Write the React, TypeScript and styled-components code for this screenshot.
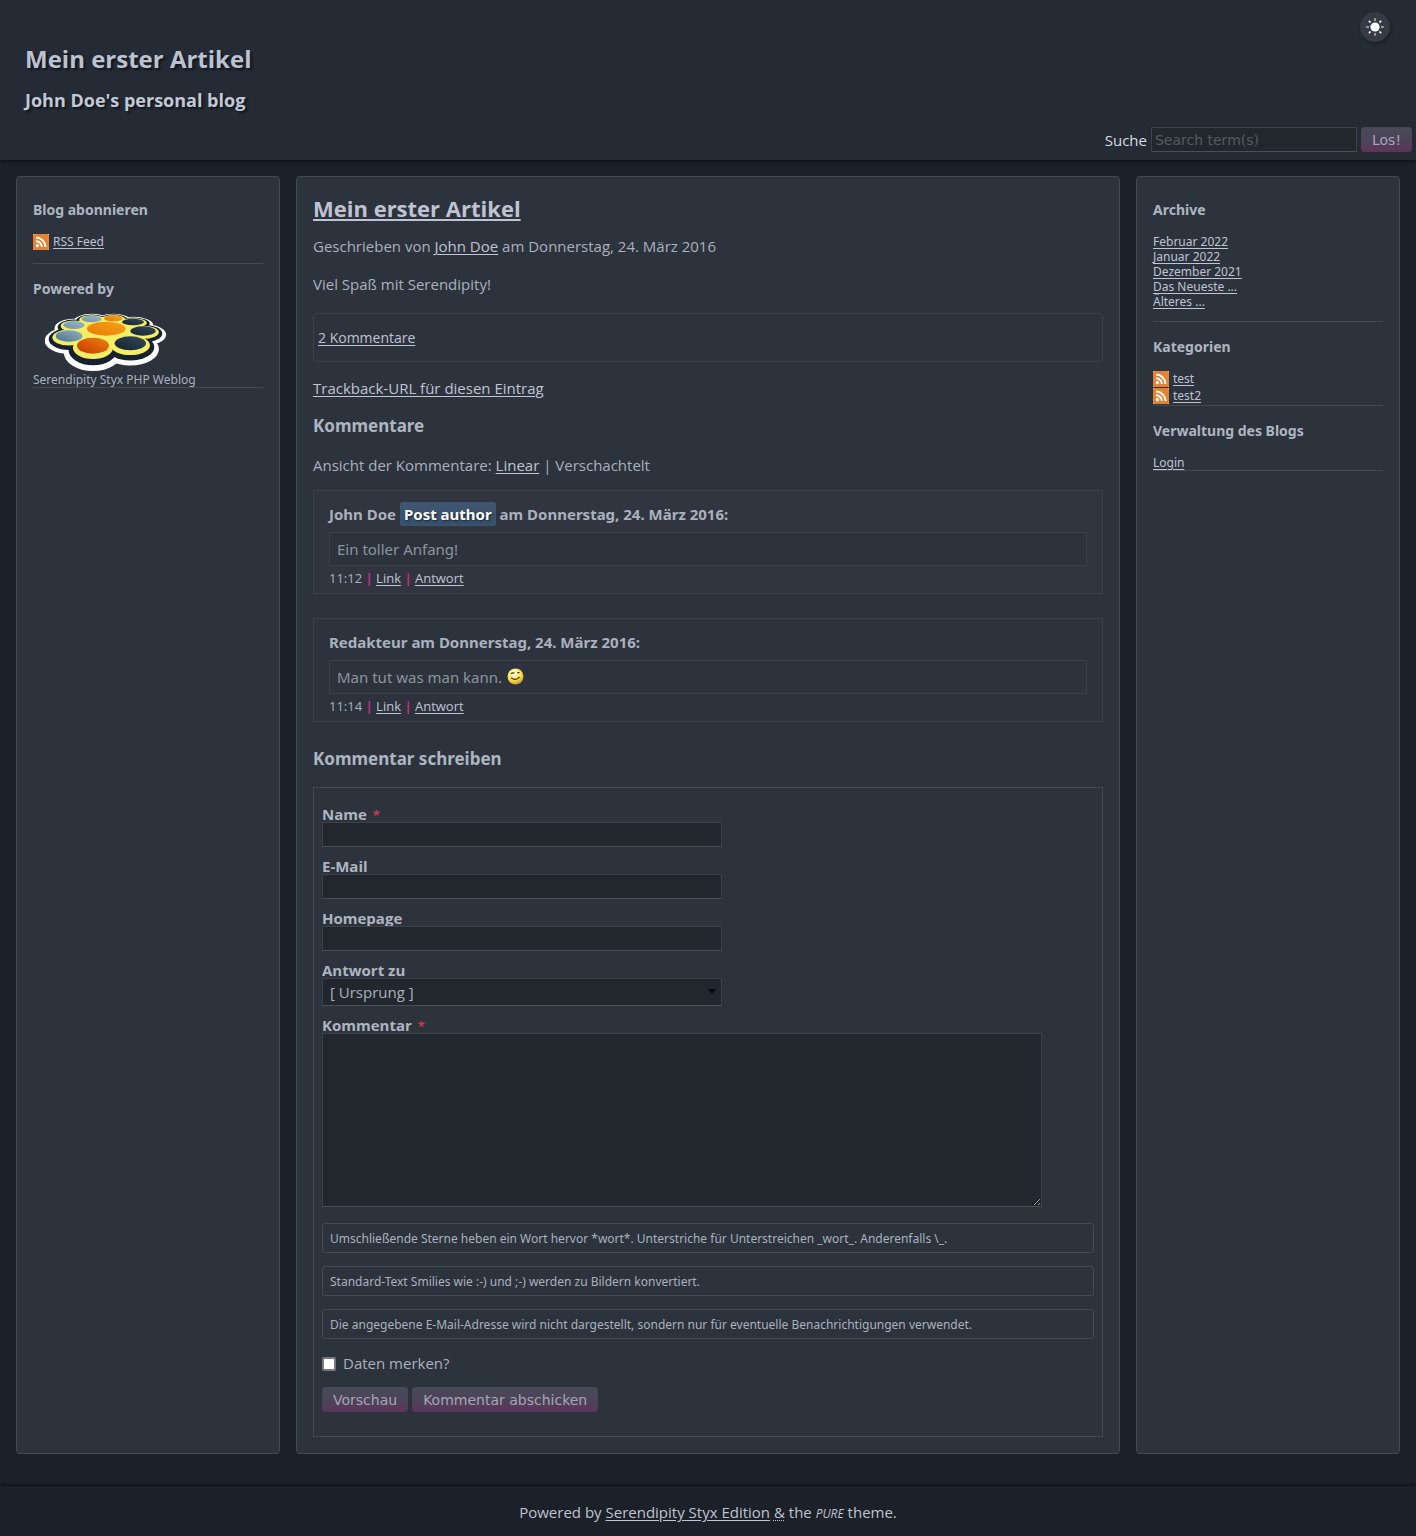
import React, { useState } from 'react';
import styled, { createGlobalStyle, css } from 'styled-components';

const color = {
  page: '#1c2028',
  header: '#242b34',
  panel: '#2d333d',
  border: '#454952',
  faint: '#3c414b',
  field: '#22272e',
  text: '#a9b1bd',
  heading: '#adb6c0',
  link: '#bfc3d2',
  accent: '#c0308a',
};

const sans = '"Open Sans", "Noto Sans", sans-serif';
const roomy = '"Noto Sans", "Open Sans", sans-serif';
const wide = '"DejaVu Sans", Verdana, sans-serif';

const GlobalStyle = createGlobalStyle`
  *, *::before, *::after { box-sizing: border-box; }
  body {
    margin: 0;
    background: ${color.page};
    color: ${color.text};
    font: 15px/24px ${sans};
  }
  h1, h2, h3, h4, p, ul { margin: 0; padding: 0; }
  ul { list-style: none; }
  a { color: ${color.link}; text-underline-offset: 2px; }
`;

const Header = styled.header`
  position: relative;
  display: flex;
  flex-direction: column;
  min-height: 160px;
  padding: 42px 4px 8px 25px;
  background: ${color.header};
  box-shadow: 0 1px 4px #0a0d12;
`;

const SiteTitle = styled.h1`
  font-size: 24px;
  line-height: 34px;
  color: #bcc2d0;
  text-shadow: 2px 2px 2px #12161c;
`;

const SiteClaim = styled.p`
  margin-top: 12px;
  font-size: 18px;
  font-weight: 700;
  color: #c3c8d6;
  text-shadow: 2px 2px 2px #12161c;
`;

const ThemeToggle = styled.button`
  position: absolute;
  top: 12px;
  right: 26px;
  display: grid;
  place-items: center;
  width: 30px;
  height: 30px;
  padding: 0;
  border: 0;
  border-radius: 50%;
  background: #353a45;
  box-shadow: 1px 2px 3px #1b1f26;
`;

const SearchForm = styled.form`
  display: flex;
  align-items: center;
  justify-content: flex-end;
  gap: 4px;
  margin-top: auto;
  color: #d5dde2;
  line-height: 20px;
`;

const fieldStyle = css`
  border: 1px solid ${color.faint};
  border-bottom-color: #4b4f57;
  border-radius: 0;
  background: ${color.field};
  color: ${color.text};
  outline: 0;
`;

const SearchInput = styled.input`
  ${fieldStyle}
  width: 206px;
  height: 25px;
  padding: 0 3px;
  font: 14px ${wide};
  &::placeholder { color: #545a62; opacity: 1; }
`;

const Button = styled.button`
  height: 25px;
  padding: 0 11px;
  border: 0;
  border-radius: 4px;
  background: linear-gradient(#464a58, #4c4358 55%, #5f3459);
  color: #a9a3b8;
  font: 14px ${wide};
`;

const Columns = styled.div`
  display: grid;
  grid-template-columns: 264px minmax(0, 1fr) 264px;
  gap: 16px;
  padding: 16px 16px 32px;
`;

const panelStyle = css`
  padding: 16px;
  border: 1px solid ${color.border};
  border-radius: 4px;
  background: ${color.panel};
`;

const Main = styled.main`${panelStyle}`;

const Sidebar = styled.aside`
  ${panelStyle}
  padding-top: 8px;
  font: 12px/15px ${roomy};
`;

const Widget = styled.section<{ $loose?: boolean }>`
  padding: 15px 0 ${p => (p.$loose ? 12 : 0)}px;
  border-bottom: 1px solid ${color.border};
`;

const WidgetTitle = styled.h3`
  margin-bottom: 14px;
  font-size: 14px;
  line-height: 20px;
  color: ${color.heading};
`;

const FeedRow = styled.li`
  display: flex;
  align-items: flex-start;
  gap: 4px;
  height: 17px;
`;

const Logo = styled.svg`
  display: block;
  margin: -1px 0 0 12px;
`;

const EntryTitle = styled.h2`
  font-size: 22px;
  line-height: 30px;
`;

const Line = styled.p<{ $top: number }>`
  margin-top: ${p => p.$top}px;
`;

const CommentCount = styled.div`
  margin-top: 17px;
  padding: 12px 4px 11px;
  border: 1px solid ${color.faint};
  border-radius: 4px;
  font-size: 14px;
`;

const SectionTitle = styled.h3<{ $top: number }>`
  margin-top: ${p => p.$top}px;
  font: 700 17px/24px ${roomy};
  color: ${color.heading};
`;

const CommentList = styled.div`
  display: grid;
  gap: 24px;
  margin-top: 13px;
`;

const Comment = styled.article<{ $own?: boolean }>`
  padding: 11px 15px 3px;
  border: 1px solid ${color.faint};
  background: ${p => (p.$own ? '#31353f' : 'transparent')};
`;

const CommentHead = styled.h4`
  font: 700 15px/24px ${roomy};
  color: ${color.text};
`;

const AuthorBadge = styled.span`
  padding: 1px 3px;
  border: 1px solid #41536a;
  border-radius: 3px;
  background: linear-gradient(#41566f, #34516f);
  color: #fff;
  text-shadow: 1px 1px 2px #14202c;
`;

const CommentBody = styled.p`
  display: flex;
  align-items: center;
  gap: 5px;
  height: 34px;
  margin-top: 6px;
  padding: 0 7px 1px;
  border: 1px solid ${color.faint};
  background: ${color.panel};
  color: #8e939b;
  font-family: ${roomy};
`;

const CommentMeta = styled.p`
  font-size: 13px;
`;

const Bar = styled.span`
  color: ${color.accent};
  font-weight: 700;
`;

const CommentForm = styled.form`
  margin-top: 16px;
  padding: 18px 8px 24px;
  border: 1px solid ${color.border};
`;

const Field = styled.div`
  display: flex;
  flex-direction: column;
  margin-bottom: 11px;
`;

const Label = styled.label`
  font-weight: 700;
  line-height: 16px;
  color: ${color.heading};
`;

const Required = styled.span`
  margin-left: 2px;
  color: #d03a4c;
  font-size: 13px;
  line-height: 1;
`;

const TextInput = styled.input`
  ${fieldStyle}
  width: 400px;
  max-width: 100%;
  height: 25px;
  padding: 0 7px;
  font: 15px ${sans};
`;

const SelectWrap = styled.div`
  position: relative;
  width: 400px;
  max-width: 100%;
`;

const Select = styled.select`
  ${fieldStyle}
  display: block;
  appearance: none;
  width: 100%;
  height: 28px;
  padding: 0 7px;
  font: 15px ${sans};
`;

const Caret = styled.svg`
  position: absolute;
  top: 11px;
  right: 6px;
  pointer-events: none;
`;

const TextArea = styled.textarea`
  ${fieldStyle}
  width: 720px;
  max-width: 100%;
  height: 174px;
  padding: 4px 7px;
  font: 15px ${sans};
`;

const Notes = styled.div`
  display: grid;
  gap: 13px;
  margin-top: 16px;
`;

const Note = styled.p`
  padding: 5px 7px 3px;
  border: 1px solid ${color.border};
  border-radius: 3px;
  font: 12px/20px ${roomy};
`;

const Remember = styled.div`
  display: flex;
  align-items: center;
  gap: 7px;
  margin-top: 12px;
`;

const CheckBox = styled.input`
  appearance: none;
  width: 14px;
  height: 14px;
  margin: 2px 0 0;
  border: 2px solid #767a80;
  border-radius: 2px;
  background: #fff;
  &:checked { background: ${color.accent}; }
`;

const Actions = styled.div`
  display: flex;
  gap: 4px;
  margin-top: 12px;
`;

const Footer = styled.footer`
  padding: 14px 16px 12px;
  text-align: center;
  color: ${color.link};
  box-shadow: 0 -1px 3px #0a0d12;
`;

const Small = styled.em`
  font-size: 12px;
`;

const Amp = styled.abbr`
  text-decoration: underline dotted 1px;
  text-underline-offset: 2px;
`;

const Sun = () => (
  <svg width="18" height="18" viewBox="0 0 18 18" aria-hidden="true">
    <circle cx="9" cy="9" r="4.6" fill="#fff" />
    <g stroke="#fff" strokeWidth="1.5">
      <path d="M9 .2v2.800M9 15v2.800M.2 9h2.800M15 9h2.800" opacity=".65" />
      <path d="M2.900 2.900l1.600 1.600M13.500 13.500l1.600 1.600M2.900 15.100l1.600-1.600M13.500 4.500l1.600-1.600" strokeWidth="1.7" />
    </g>
  </svg>
);

const FeedIcon = () => (
  <svg width="16" height="16" viewBox="0 0 16 16" aria-hidden="true">
    <rect width="16" height="16" fill="#fbe3cc" />
    <rect width="16" height="16" rx="1.5" fill="#e58334" />
    <circle cx="4.4" cy="11.700" r="1.6" fill="#fff" />
    <path d="M3 7.200a5.900 5.900 0 0 1 5.900 5.900M3 3.600a9.500 9.500 0 0 1 9.500 9.500" fill="none" stroke="#fff" strokeWidth="2" />
  </svg>
);

const tiles: [number, number, number, number, string][] = [
  [185, 41, 30, 10, 'url(#sky)'],
  [250, 39, 28, 9, 'url(#amber)'],
  [309, 50, 33, 10, 'url(#navy)'],
  [132, 59, 32, 12, 'url(#sky)'],
  [229, 70, 58, 21, 'url(#amber)'],
  [339, 77, 38, 14, 'url(#navy)'],
  [117, 92, 40, 17, 'url(#blue)'],
  [301, 114, 47, 21, 'url(#navy)'],
  [189, 121, 48, 24, 'url(#ember)'],
];

const layers = [
  { fill: '#fff', dx: 33, dy: 30, shift: 18 },
  { fill: '#17222e', dx: 21, dy: 20, shift: 12 },
  { fill: '#f3ee66', dx: 10, dy: 9, shift: 6 },
];

const gradients: [string, string, string][] = [
  ['sky', '#6f94aa', '#9bb8c6'],
  ['blue', '#4b7393', '#8fb0c2'],
  ['amber', '#e77a00', '#f5a420'],
  ['ember', '#c33a00', '#f08010'],
  ['navy', '#142230', '#33495b'],
];

const StyxLogo = () => (
  <Logo width="122" height="60" viewBox="46 20 364 180" role="img" aria-label="Serendipity Styx">
    <defs>
      {gradients.map(([id, from, to]) => (
        <linearGradient key={id} id={id} x1="0" y1="1" x2="1" y2="0">
          <stop offset="0" stopColor={from} />
          <stop offset="1" stopColor={to} />
        </linearGradient>
      ))}
    </defs>
    {layers.map(layer => (
      <g key={layer.fill} fill={layer.fill}>
        {tiles.map(([cx, cy, rx, ry]) => {
          const depth = ry / 22;
          return (
            <ellipse
              key={`${cx}-${cy}`}
              cx={cx}
              cy={cy + layer.shift * depth}
              rx={rx + (layer.dx * rx) / 40}
              ry={ry + layer.dy * depth}
            />
          );
        })}
      </g>
    ))}
    <ellipse cx="229" cy="76" rx="110" ry="42" fill="#f3ee66" />
    {tiles.map(([cx, cy, rx, ry, fill]) => (
      <ellipse key={`${cx}-${cy}`} cx={cx} cy={cy} rx={rx} ry={ry} fill={fill} />
    ))}
  </Logo>
);

const Wink = () => (
  <svg width="17" height="17" viewBox="0 0 17 17" role="img" aria-label=";-)">
    <defs>
      <radialGradient id="face" cx=".4" cy=".3" r=".75">
        <stop offset="0" stopColor="#fffde0" />
        <stop offset=".6" stopColor="#fbe04e" />
        <stop offset="1" stopColor="#c08e18" />
      </radialGradient>
    </defs>
    <circle cx="8.500" cy="8.500" r="8" fill="url(#face)" />
    <path d="M4 5.800q1.600-1.500 3.400-.6M10.200 4.600h2.400" stroke="#4b3a1c" strokeWidth="1.300" fill="none" />
    <path d="M4.200 9.800q4.600 3.800 8.300-1" stroke="#4b3a1c" strokeWidth="1.300" fill="none" />
  </svg>
);

const archive = ['Februar 2022', 'Januar 2022', 'Dezember 2021', 'Das Neueste ...', 'Älteres ...'];

const notes = [
  'Umschließende Sterne heben ein Wort hervor *wort*. Unterstriche für Unterstreichen _wort_. Anderenfalls \\_.',
  'Standard-Text Smilies wie :-) und ;-) werden zu Bildern konvertiert.',
  'Die angegebene E-Mail-Adresse wird nicht dargestellt, sondern nur für eventuelle Benachrichtigungen verwendet.',
];

const Meta = ({ time }: { time: string }) => (
  <CommentMeta>
    {time} <Bar>|</Bar> <a href="#link">Link</a> <Bar>|</Bar> <a href="#reply">Antwort</a>
  </CommentMeta>
);

const stop = (e: React.FormEvent) => e.preventDefault();

export default function App() {
  const [remember, setRemember] = useState(false);

  return (
    <>
      <GlobalStyle />
      <Header>
        <SiteTitle>Mein erster Artikel</SiteTitle>
        <SiteClaim>John Doe's personal blog</SiteClaim>
        <ThemeToggle type="button" aria-label="Theme">
          <Sun />
        </ThemeToggle>
        <SearchForm onSubmit={stop}>
          <label htmlFor="search">Suche</label>
          <SearchInput id="search" type="search" placeholder="Search term(s)" />
          <Button type="submit">Los!</Button>
        </SearchForm>
      </Header>

      <Columns>
        <Sidebar>
          <Widget $loose>
            <WidgetTitle>Blog abonnieren</WidgetTitle>
            <ul>
              <FeedRow>
                <FeedIcon />
                <a href="#rss">RSS Feed</a>
              </FeedRow>
            </ul>
          </Widget>
          <Widget>
            <WidgetTitle>Powered by</WidgetTitle>
            <StyxLogo />
            <p>Serendipity Styx PHP Weblog</p>
          </Widget>
        </Sidebar>

        <Main>
          <EntryTitle>
            <a href="#entry">Mein erster Artikel</a>
          </EntryTitle>
          <Line $top={11}>
            Geschrieben von <a href="#author">John Doe</a> am Donnerstag, 24. März 2016
          </Line>
          <Line $top={14}>Viel Spaß mit Serendipity!</Line>
          <CommentCount>
            <a href="#comments">2 Kommentare</a>
          </CommentCount>
          <Line $top={14}>
            <a href="#trackback">Trackback-URL für diesen Eintrag</a>
          </Line>
          <SectionTitle $top={14}>Kommentare</SectionTitle>
          <Line $top={15}>
            Ansicht der Kommentare: <a href="#linear">Linear</a> | Verschachtelt
          </Line>

          <CommentList>
            <Comment $own>
              <CommentHead>
                John Doe <AuthorBadge>Post author</AuthorBadge> am Donnerstag, 24. März 2016:
              </CommentHead>
              <CommentBody>Ein toller Anfang!</CommentBody>
              <Meta time="11:12" />
            </Comment>
            <Comment>
              <CommentHead>Redakteur am Donnerstag, 24. März 2016:</CommentHead>
              <CommentBody>
                Man tut was man kann. <Wink />
              </CommentBody>
              <Meta time="11:14" />
            </Comment>
          </CommentList>

          <SectionTitle $top={25}>Kommentar schreiben</SectionTitle>
          <CommentForm onSubmit={stop}>
            <Field>
              <Label htmlFor="name">
                Name <Required>*</Required>
              </Label>
              <TextInput id="name" type="text" />
            </Field>
            <Field>
              <Label htmlFor="email">E-Mail</Label>
              <TextInput id="email" type="email" />
            </Field>
            <Field>
              <Label htmlFor="url">Homepage</Label>
              <TextInput id="url" type="url" />
            </Field>
            <Field>
              <Label htmlFor="replyto">Antwort zu</Label>
              <SelectWrap>
                <Select id="replyto">
                  <option>[ Ursprung ]</option>
                </Select>
                <Caret width="8" height="5" viewBox="0 0 8 5" aria-hidden="true">
                  <path d="M0 0h8L4 5z" fill="#07090c" />
                </Caret>
              </SelectWrap>
            </Field>
            <Field>
              <Label htmlFor="comment">
                Kommentar <Required>*</Required>
              </Label>
              <TextArea id="comment" />
            </Field>
            <Notes>
              {notes.map(note => (
                <Note key={note}>{note}</Note>
              ))}
            </Notes>
            <Remember>
              <CheckBox
                id="remember"
                type="checkbox"
                checked={remember}
                onChange={e => setRemember(e.target.checked)}
              />
              <label htmlFor="remember">Daten merken?</label>
            </Remember>
            <Actions>
              <Button type="button">Vorschau</Button>
              <Button type="submit">Kommentar abschicken</Button>
            </Actions>
          </CommentForm>
        </Main>

        <Sidebar>
          <Widget $loose>
            <WidgetTitle>Archive</WidgetTitle>
            <ul>
              {archive.map(item => (
                <li key={item}>
                  <a href="#archive">{item}</a>
                </li>
              ))}
            </ul>
          </Widget>
          <Widget>
            <WidgetTitle>Kategorien</WidgetTitle>
            <ul>
              {['test', 'test2'].map(item => (
                <FeedRow key={item}>
                  <FeedIcon />
                  <a href="#category">{item}</a>
                </FeedRow>
              ))}
            </ul>
          </Widget>
          <Widget>
            <WidgetTitle>Verwaltung des Blogs</WidgetTitle>
            <a href="#login">Login</a>
          </Widget>
        </Sidebar>
      </Columns>

      <Footer>
        Powered by <a href="#styx">Serendipity Styx Edition</a> <Amp>&amp;</Amp> the{' '}
        <Small>PURE</Small> theme.
      </Footer>
    </>
  );
}
